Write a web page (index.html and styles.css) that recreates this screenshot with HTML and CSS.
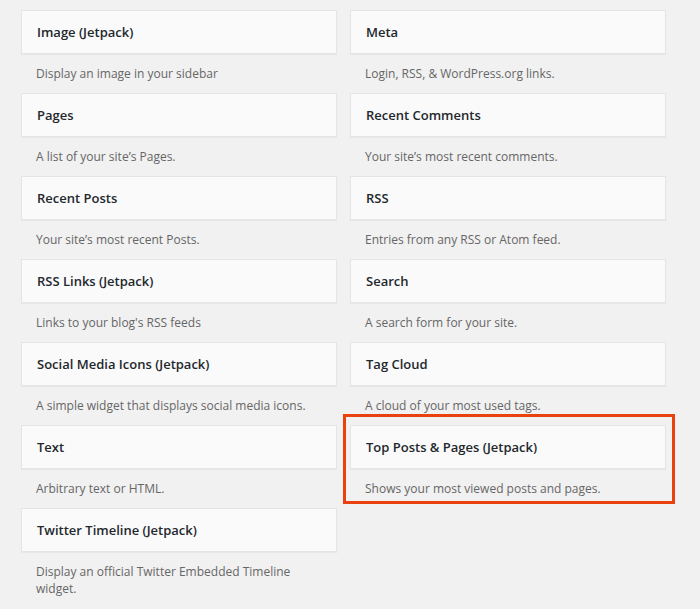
FILE: index.html
```html
<!DOCTYPE html>
<html lang="en">
<head>
<meta charset="UTF-8">
<title>Available Widgets</title>
<link rel="stylesheet" href="styles.css">
</head>
<body>
    <div class="widget_list">
        <div class="widget_col">
            <div class="widget">
                <div class="widget_top"><h3>Image (Jetpack)</h3></div>
                <p class="widget_desc">Display an image in your sidebar</p>
            </div>
            <div class="widget">
                <div class="widget_top"><h3>Pages</h3></div>
                <p class="widget_desc">A list of your site’s Pages.</p>
            </div>
            <div class="widget">
                <div class="widget_top"><h3>Recent Posts</h3></div>
                <p class="widget_desc">Your site’s most recent Posts.</p>
            </div>
            <div class="widget">
                <div class="widget_top"><h3>RSS Links (Jetpack)</h3></div>
                <p class="widget_desc">Links to your blog's RSS feeds</p>
            </div>
            <div class="widget">
                <div class="widget_top"><h3>Social Media Icons (Jetpack)</h3></div>
                <p class="widget_desc">A simple widget that displays social media icons.</p>
            </div>
            <div class="widget">
                <div class="widget_top"><h3>Text</h3></div>
                <p class="widget_desc">Arbitrary text or HTML.</p>
            </div>
            <div class="widget">
                <div class="widget_top"><h3>Twitter Timeline (Jetpack)</h3></div>
                <p class="widget_desc">Display an official Twitter Embedded Timeline widget.</p>
            </div>
        </div>
        <div class="widget_col">
            <div class="widget">
                <div class="widget_top"><h3>Meta</h3></div>
                <p class="widget_desc">Login, RSS, &amp; WordPress.org links.</p>
            </div>
            <div class="widget">
                <div class="widget_top"><h3>Recent Comments</h3></div>
                <p class="widget_desc">Your site’s most recent comments.</p>
            </div>
            <div class="widget">
                <div class="widget_top"><h3>RSS</h3></div>
                <p class="widget_desc">Entries from any RSS or Atom feed.</p>
            </div>
            <div class="widget">
                <div class="widget_top"><h3>Search</h3></div>
                <p class="widget_desc">A search form for your site.</p>
            </div>
            <div class="widget">
                <div class="widget_top"><h3>Tag Cloud</h3></div>
                <p class="widget_desc">A cloud of your most used tags.</p>
            </div>
            <div class="widget highlight">
                <div class="widget_top"><h3>Top Posts &amp; Pages (Jetpack)</h3></div>
                <p class="widget_desc">Shows your most viewed posts and pages.</p>
            </div>
        </div>
    </div>
</body>
</html>
```

FILE: styles.css
```css
*,
*::before,
*::after {
  box-sizing: border-box;
}
body {
    margin: 0;
    background: #f1f1f1;
    font-family: "Open Sans", "Noto Sans", sans-serif;
    font-size: 13px;
    color: #23282d;
}
.widget_list {
    display: flex;
    gap: 13px;
    padding: 10px 0 0 21px;
}
.widget_col {
    width: 316px;
}
.widget {
    position: relative;
}
.widget_top {
    height: 44px;
    display: flex;
    align-items: center;
    padding: 0 15px;
    background: #fafafa;
    border: 1px solid #e5e5e5;
    box-shadow: 0 1px 1px rgba(0, 0, 0, .04);
}
.widget_top h3 {
    margin: 0;
    font-size: 13px;
    font-weight: 600;
    color: #23282d;
}
.widget_desc {
    margin: 0;
    padding: 11px 15px 11px;
    font-size: 12px;
    line-height: 17px;
    color: #666;
}
.highlight::after {
    content: "";
    position: absolute;
    left: -7px;
    top: -11px;
    right: -9px;
    bottom: 4px;
    border: 3px solid #e9420e;
}
```
